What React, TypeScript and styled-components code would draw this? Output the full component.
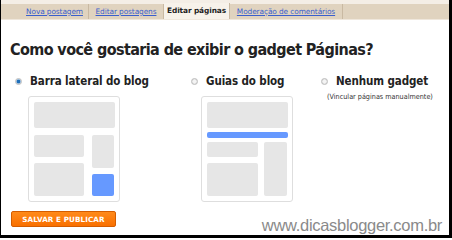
import styled, { createGlobalStyle } from "styled-components";

const GlobalStyle = createGlobalStyle`
  html, body {
    margin: 0;
    padding: 0;
    background: #ffffff;
  }
`;

const Root = styled.div`
  width: 452px;
  height: 238px;
  box-sizing: border-box;
  border-left: 1px solid #000;
  border-right: 3px solid #000;
  border-bottom: 3px solid #000;
  background: #ffffff;
  font-family: "DejaVu Sans", Verdana, sans-serif;
  overflow: hidden;
  display: flex;
  flex-direction: column;
`;

const TopStrip = styled.div`
  height: 4px;
  background: #f4eee6;
`;

const TabBar = styled.div`
  height: 16px;
  background: #e0d3bf;
  border-bottom: 1px solid #efe7dc;
  display: flex;
  padding-left: 20px;
`;

const Tab = styled.div<{ $active?: boolean; $w: number }>`
  width: ${(p) => p.$w}px;
  box-sizing: border-box;
  display: flex;
  align-items: center;
  justify-content: center;
  border-right: 1px solid #c9b9a2;
  margin-top: ${(p) => (p.$active ? "-1px" : "0")};
  background: ${(p) => (p.$active ? "#f7f2ea" : "transparent")};
  font-size: 7.4px;
  letter-spacing: -0.1px;
  color: ${(p) => (p.$active ? "#222" : "#3a5fcd")};
  font-weight: ${(p) => (p.$active ? "bold" : "normal")};
  text-decoration: ${(p) => (p.$active ? "none" : "underline")};
`;

const Content = styled.div`
  flex: 1;
  padding: 20px 0 0 9px;
  display: flex;
  flex-direction: column;
`;

const Title = styled.h1`
  margin: 0;
  font-size: 16px;
  line-height: 20px;
  font-weight: bold;
  color: #222;
  letter-spacing: -0.6px;
  font-family: "DejaVu Sans Condensed", "DejaVu Sans", sans-serif;
`;

const Options = styled.div`
  display: flex;
  margin-top: 15px;
  padding-left: 5px;
`;

const Option = styled.div<{ $w: number }>`
  width: ${(p) => p.$w}px;
  display: flex;
  flex-direction: column;
`;

const LabelRow = styled.div`
  display: flex;
  align-items: center;
  gap: 8px;
  height: 12px;
`;

const Radio = styled.span<{ $checked?: boolean }>`
  width: 5px;
  height: 5px;
  border-radius: 50%;
  border: 1px solid #bdbdbd;
  background: ${(p) =>
    p.$checked
      ? "radial-gradient(circle, #1f6fb8 0 1.4px, #8fb8e0 2px, #eee 3px)"
      : "radial-gradient(circle, #f4f4f4 0 1.3px, #d6d6d6 3px)"};
`;

const Label = styled.span`
  font-family: "DejaVu Sans Condensed", "DejaVu Sans", sans-serif;
  font-size: 11.5px;
  font-weight: bold;
  color: #222;
  letter-spacing: -0.1px;
`;

const Note = styled.div`
  font-family: "DejaVu Sans Condensed", "DejaVu Sans", sans-serif;
  font-size: 7.2px;
  color: #333;
  margin: 5px 0 0 6px;
  white-space: nowrap;
`;

const Frame = styled.div<{ $indent: number }>`
  margin: 9px 0 0 ${(p) => p.$indent}px;
  width: 92px;
  height: 106px;
  box-sizing: border-box;
  border: 1.5px solid #dedede;
  border-radius: 3px;
  padding: 4.5px 4.5px 5.5px 4.5px;
  display: flex;
  flex-direction: column;
`;

const Row = styled.div<{ $gap: number }>`
  flex: 1;
  display: flex;
  gap: ${(p) => p.$gap}px;
`;

const Column = styled.div<{ $w: number }>`
  width: ${(p) => p.$w}px;
  display: flex;
  flex-direction: column;
  gap: 6px;
`;

const Block = styled.div<{ $h?: number; $blue?: boolean; $mb?: number }>`
  height: ${(p) => (p.$h ? `${p.$h}px` : "auto")};
  flex: ${(p) => (p.$h ? "none" : "1")};
  margin-bottom: ${(p) => p.$mb ?? 0}px;
  background: ${(p) => (p.$blue ? "#6699ff" : "#e6e6e6")};
  border-radius: 2px;
`;

const Footer = styled.div`
  margin-top: 9px;
  display: flex;
  align-items: flex-start;
  justify-content: space-between;
  padding-right: 7px;
`;

const SaveButton = styled.button`
  width: 105px;
  height: 16px;
  margin: 0 0 0 1px;
  padding: 0;
  border: 1px solid #d45d00;
  border-radius: 2px;
  background: linear-gradient(#ff8a1a, #f97000);
  color: #fff;
  font-family: "DejaVu Sans", sans-serif;
  font-size: 7.2px;
  font-weight: bold;
  letter-spacing: 0.1px;
`;

const Watermark = styled.div`
  font-family: "Liberation Sans", Arial, sans-serif;
  font-size: 16.5px;
  color: #8a8a8a;
  margin-top: 5px;
  letter-spacing: -0.3px;
`;

const tabs = [
  { label: "Nova postagem", w: 68 },
  { label: "Editar postagens", w: 75 },
  { label: "Editar páginas", w: 66, active: true },
  { label: "Moderação de comentários", w: 113 },
];

const App = () => {
  return (
    <>
      <GlobalStyle />
      <Root>
        <TopStrip />
        <TabBar>
          {tabs.map((t) => (
            <Tab key={t.label} $w={t.w} $active={t.active}>
              {t.label}
            </Tab>
          ))}
        </TabBar>
        <Content>
          <Title>Como você gostaria de exibir o gadget Páginas?</Title>
          <Options>
            <Option $w={176}>
              <LabelRow>
                <Radio $checked />
                <Label>Barra lateral do blog</Label>
              </LabelRow>
              <Frame $indent={13}>
                <Block $h={26} $mb={7} />
                <Row $gap={8}>
                  <Column $w={50}>
                    <Block $h={22} />
                    <Block />
                  </Column>
                  <Column $w={22}>
                    <Block />
                    <Block $h={22} $blue />
                  </Column>
                </Row>
              </Frame>
            </Option>
            <Option $w={130}>
              <LabelRow>
                <Radio />
                <Label>Guias do blog</Label>
              </LabelRow>
              <Frame $indent={10}>
                <Block $h={26} $mb={4} />
                <Block $h={6} $mb={4} $blue />
                <Row $gap={6}>
                  <Column $w={51}>
                    <Block $h={15} />
                    <Block />
                  </Column>
                  <Column $w={23}>
                    <Block />
                  </Column>
                </Row>
              </Frame>
            </Option>
            <Option $w={120}>
              <LabelRow>
                <Radio />
                <Label>Nenhum gadget</Label>
              </LabelRow>
              <Note>(Vincular páginas manualmente)</Note>
            </Option>
          </Options>
          <Footer>
            <SaveButton>SALVAR E PUBLICAR</SaveButton>
            <Watermark>www.dicasblogger.com.br</Watermark>
          </Footer>
        </Content>
      </Root>
    </>
  );
};

export default App;
